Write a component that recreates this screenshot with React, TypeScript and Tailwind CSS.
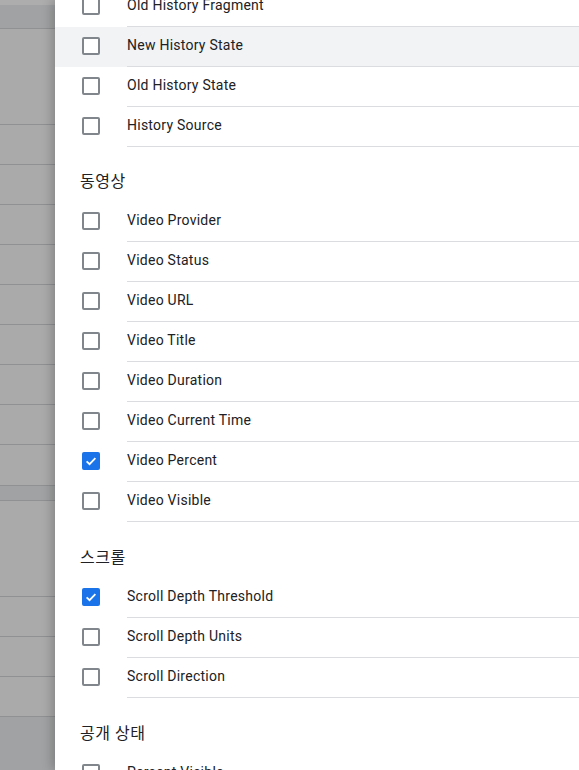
import React from 'react';

type Item = { label: string; checked?: boolean; hover?: boolean };
type Section = { title?: string; items: Item[] };

const sections: Section[] = [
  {
    items: [
      { label: 'Old History Fragment' },
      { label: 'New History State', hover: true },
      { label: 'Old History State' },
      { label: 'History Source' },
    ],
  },
  {
    title: '동영상',
    items: [
      { label: 'Video Provider' },
      { label: 'Video Status' },
      { label: 'Video URL' },
      { label: 'Video Title' },
      { label: 'Video Duration' },
      { label: 'Video Current Time' },
      { label: 'Video Percent', checked: true },
      { label: 'Video Visible' },
    ],
  },
  {
    title: '스크롤',
    items: [
      { label: 'Scroll Depth Threshold', checked: true },
      { label: 'Scroll Depth Units' },
      { label: 'Scroll Direction' },
    ],
  },
  {
    title: '공개 상태',
    items: [{ label: 'Percent Visible' }],
  },
];

function Checkbox({ checked }: { checked?: boolean }) {
  if (checked) {
    return (
      <div className="w-[18px] h-[18px] rounded-[2px] bg-[#1a73e8] flex items-center justify-center">
        <svg width="14" height="14" viewBox="0 0 24 24" fill="none">
          <path d="M4.5 12.5l5 5L19.5 7" stroke="white" strokeWidth="3" />
        </svg>
      </div>
    );
  }
  return <div className="w-[18px] h-[18px] rounded-[2px] border-2 border-[#80868b] bg-white" />;
}

function Row({ item }: { item: Item }) {
  return (
    <div className={`flex h-10 ${item.hover ? 'bg-[#f1f3f4]' : ''}`}>
      <div className="w-[72px] shrink-0 flex items-center pl-[27px] pb-[2px]">
        <Checkbox checked={item.checked} />
      </div>
      <div className="flex-1 flex items-center pb-[2px] border-b border-[#dadce0] text-[14px] tracking-[0.25px] text-[#202124]">
        {item.label}
      </div>
    </div>
  );
}

function Backdrop() {
  const line = 'border-b border-[#909193]';
  return (
    <div className="w-[55px] shrink-0 flex flex-col bg-[#aaaaaa]">
      <div className="h-[5px] bg-[#adadad]" />
      <div className={`h-[24px] bg-[#a0a2a3] ${line}`} />
      <div className={`h-[96px] ${line}`} />
      {Array.from({ length: 8 }).map((_, i) => (
        <div key={i} className={`h-10 ${line}`} />
      ))}
      <div className={`h-[41px] ${line}`} />
      <div className={`h-[15px] bg-[#a0a2a3] ${line}`} />
      <div className={`h-[96px] ${line}`} />
      {Array.from({ length: 3 }).map((_, i) => (
        <div key={i} className={`h-10 ${line}`} />
      ))}
      <div className="flex-1 bg-[#a0a2a3]" />
    </div>
  );
}

export default function App() {
  return (
    <div className="flex h-[770px] overflow-hidden" style={{ fontFamily: 'Roboto, "Noto Sans CJK KR", sans-serif' }}>
      <Backdrop />
      <div className="relative flex-1 bg-white shadow-[-3px_0_10px_rgba(0,0,0,0.22)]">
        <div className="-mt-[13px]">
          {sections.map((s, i) => (
            <div key={i}>
              {s.title && (
                <div
                  className={`pl-[25px] text-[16px] leading-6 tracking-[0.5px] text-[#202124] ${
                    i === 1 ? 'h-[55px] pt-[23px]' : 'h-[56px] pt-[24px]'
                  }`}
                >
                  {s.title}
                </div>
              )}
              {s.items.map((it) => (
                <Row key={it.label} item={it} />
              ))}
            </div>
          ))}
        </div>
      </div>
    </div>
  );
}
